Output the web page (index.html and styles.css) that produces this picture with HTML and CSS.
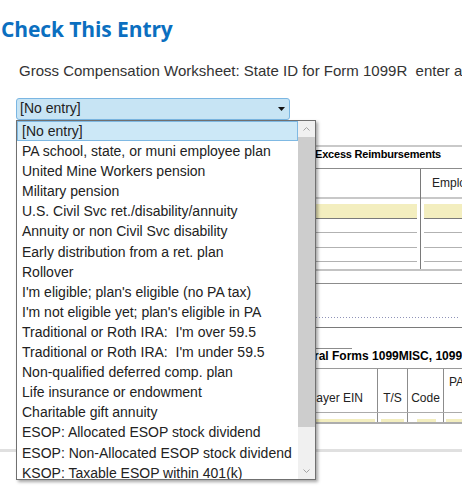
FILE: index.html
```html
<!DOCTYPE html>
<html>
<head>
<meta charset="utf-8">
<link rel="stylesheet" href="styles.css">
</head>
<body>
<h1 class="title">Check This Entry</h1>
<p class="prompt">Gross Compensation Worksheet: State ID for Form 1099R&nbsp; enter a code</p>

<div class="picker">
  <div class="select">
    <span class="select-value">[No entry]</span>
    <svg class="select-arrow" width="7" height="4" viewBox="0 0 7 4"><path d="M0 0H7L3.5 4Z" fill="#111"/></svg>
  </div>
  <div class="listbox">
    <ul class="options">
      <li class="option selected">[No entry]</li>
      <li class="option">PA school, state, or muni employee plan</li>
      <li class="option">United Mine Workers pension</li>
      <li class="option">Military pension</li>
      <li class="option">U.S. Civil Svc ret./disability/annuity</li>
      <li class="option">Annuity or non Civil Svc disability</li>
      <li class="option">Early distribution from a ret. plan</li>
      <li class="option">Rollover</li>
      <li class="option">I'm eligible; plan's eligible (no PA tax)</li>
      <li class="option">I'm not eligible yet; plan's eligible in PA</li>
      <li class="option">Traditional or Roth IRA:&nbsp; I'm over 59.5</li>
      <li class="option">Traditional or Roth IRA:&nbsp; I'm under 59.5</li>
      <li class="option">Non-qualified deferred comp. plan</li>
      <li class="option">Life insurance or endowment</li>
      <li class="option">Charitable gift annuity</li>
      <li class="option">ESOP: Allocated ESOP stock dividend</li>
      <li class="option">ESOP: Non-Allocated ESOP stock dividend</li>
      <li class="option">KSOP: Taxable ESOP within 401(k)</li>
    </ul>
    <div class="scrollbar">
      <div class="sb-btn"><svg width="7" height="4" viewBox="0 0 7 4"><path d="M0.5 3.5L3.5 0.5L6.5 3.5" fill="none" stroke="#a3a3a3" stroke-width="1"/></svg></div>
      <div class="sb-thumb"></div>
      <div class="sb-track"></div>
      <div class="sb-btn"><svg width="7" height="4" viewBox="0 0 7 4"><path d="M0.5 0.5L3.5 3.5L6.5 0.5" fill="none" stroke="#a3a3a3" stroke-width="1"/></svg></div>
    </div>
  </div>
</div>

<div class="sheet">
  <div class="form">
    <div class="sec-head">Excess Reimbursements</div>
    <div class="cols">
      <div class="col col-a">
        <div class="col-head"></div>
        <div class="band"></div>
        <div class="col-body">
          <div class="cell-input"></div>
          <div class="cell-line h13"></div>
          <div class="cell-line h14"></div>
          <div class="cell-line h13"></div>
        </div>
      </div>
      <div class="col col-b">
        <div class="col-head">Employee Reimbursements</div>
        <div class="band"></div>
        <div class="col-body">
          <div class="cell-input"></div>
          <div class="cell-line h13"></div>
          <div class="cell-line h14"></div>
          <div class="cell-line h13"></div>
        </div>
      </div>
    </div>
    <div class="band band-full"></div>
    <div class="blank"></div>
    <div class="dots"></div>
    <div class="blank2"></div>
    <div class="short-rule"></div>
    <div class="sec-head2">Federal Forms 1099MISC, 1099R</div>
    <div class="tbl-head">
      <div class="th th-ein">Payer EIN</div>
      <div class="th th-center">T/S</div>
      <div class="th th-center">Code</div>
      <div class="th th-pa">PA</div>
    </div>
    <div class="tbl-row">
      <div class="td td-ein"><span class="fill"></span></div>
      <div class="td td-ts"><span class="fill"></span></div>
      <div class="td td-code"><span class="fill"></span></div>
      <div class="td td-pa"><span class="fill"></span></div>
    </div>
  </div>
</div>
<div class="separator"></div>
</body>
</html>
```

FILE: styles.css
```css
html, body {
  margin: 0;
  padding: 0;
  background: #fff;
}
body {
  width: 462px;
  height: 501px;
  overflow: hidden;
  font-family: "Liberation Sans", Arial, sans-serif;
  color: #222;
}

.title {
  margin: 15px 0 0 1px;
  font-family: "Open Sans", "Liberation Sans", sans-serif;
  font-weight: 700;
  font-size: 21px;
  line-height: 28px;
  color: #0b6fc0;
  letter-spacing: -0.1px;
}

.prompt {
  margin: 19px 0 0 19px;
  font-size: 15px;
  line-height: 18px;
  color: #333;
  white-space: nowrap;
}

.picker {
  position: relative;
  margin: 18px 0 0 16px;
  width: 274px;
}

.select {
  box-sizing: border-box;
  height: 22px;
  border: 1px solid #7bb6e2;
  border-radius: 3px;
  background: #c7e4f4;
  display: flex;
  align-items: center;
  justify-content: space-between;
  padding: 0 4px 0 3px;
  font-size: 14px;
  line-height: 19px;
  color: #222;
}
.select-value {
  padding-bottom: 1px;
}
.select-arrow {
  display: block;
  margin-bottom: 1px;
}

.listbox {
  position: absolute;
  top: 22px;
  left: 0;
  box-sizing: border-box;
  width: 300px;
  height: 360px;
  border: 1px solid #707070;
  background: #fff;
  display: flex;
  box-shadow: 2px 2px 3px rgba(0, 0, 0, 0.35);
  z-index: 5;
}

.options {
  flex: 1;
  margin: 0;
  padding: 0;
  list-style: none;
  overflow: hidden;
}
.option {
  height: 20.1px;
  line-height: 21px;
  padding-left: 5px;
  font-size: 14px;
  white-space: nowrap;
  color: #222;
}
.option.selected {
  background: #cce8f7;
  box-shadow: inset 0 0 0 1px #7fb9e3;
}

.scrollbar {
  width: 17px;
  background: #f0f0f0;
  display: flex;
  flex-direction: column;
}
.sb-btn {
  height: 16px;
  display: flex;
  align-items: center;
  justify-content: center;
}
.sb-btn:last-child {
  height: 17px;
}
.sb-thumb {
  height: 290px;
  background: #cdcdcd;
}
.sb-track {
  flex: 1;
}

/* background form */
.sheet {
  margin: 25px 0 0 16px;
  overflow: hidden;
}
.form {
  width: 560px;
  color: #000;
}

.sec-head {
  height: 21px;
  border-top: 2px solid #c9c9c9;
  border-bottom: 1px solid #8c8c8c;
  padding-left: 299px;
  font-weight: 700;
  font-size: 11px;
  line-height: 14px;
  letter-spacing: -0.2px;
  white-space: nowrap;
}

.cols {
  display: grid;
  grid-template-columns: 405px 1fr;
}
.col {
  box-sizing: border-box;
}
.col-a {
  border-right: 1px solid #7a7a7a;
}
.col-head {
  height: 28px;
  font-size: 12px;
  line-height: 28px;
  padding-left: 11px;
  white-space: nowrap;
  color: #222;
}
.band {
  height: 2px;
  background: #c8c8c8;
}
.col-body {
  padding: 5px 0 7px;
}
.col-a .col-body {
  margin-right: 3px;
}
.col-b .col-body {
  margin-left: 3px;
}
.cell-input {
  height: 14px;
  background: #f3eebf;
  border-bottom: 1px solid #7a7a7a;
}
.cell-line {
  border-bottom: 1px solid #b2b2b2;
}
.h13 { height: 13px; }
.h14 { height: 14px; }

.band-full {
  background: #c3c3c3;
}
.blank {
  height: 12px;
  border-bottom: 1px solid #8c8c8c;
}
.dots {
  height: 34px;
  background-image: repeating-linear-gradient(90deg, #8f93b8 0 1px, transparent 1px 3px);
  background-size: 100% 1px;
  background-repeat: no-repeat;
  background-position: 0 33px;
  width: 444px;
}
.blank2 {
  height: 9px;
  border-bottom: 1px solid #7a7a7a;
}
.short-rule {
  width: 336px;
  height: 20px;
  border-bottom: 1px solid #8c8c8c;
}
.sec-head2 {
  height: 19px;
  border-bottom: 1px solid #9a9a9a;
  padding-left: 270px;
  font-weight: 700;
  font-size: 12px;
  line-height: 14px;
  white-space: nowrap;
}

.tbl-head, .tbl-row {
  display: grid;
  grid-template-columns: 362px 30px 36px 1fr;
}
.tbl-head {
  height: 43px;
  border-bottom: 1px solid #ababab;
}
.th {
  box-sizing: border-box;
  border-right: 1px solid #8c8c8c;
  font-size: 12px;
  line-height: 14px;
  color: #222;
  white-space: nowrap;
  display: flex;
  align-items: flex-end;
  padding-bottom: 7px;
}
.th-ein {
  justify-content: flex-end;
  padding-right: 14px;
}
.th-center {
  justify-content: center;
}
.th-pa {
  border-right: 0;
  align-items: flex-start;
  padding: 6px 0 0 5px;
}

.tbl-row {
  height: 9px;
  border-bottom: 2px solid #adadad;
}
.td {
  box-sizing: border-box;
  border-right: 1px solid #8c8c8c;
  display: flex;
  align-items: flex-end;
}
.td-pa {
  border-right: 0;
}
.fill {
  display: block;
  height: 3px;
  background: #f3eebf;
  flex: 1;
}
.td-ein .fill { margin-right: 2px; }
.td-ts .fill { margin: 0 3px; }
.td-code .fill { margin: 0 7px 0 9px; }
.td-pa .fill { margin-left: 2px; }

.separator {
  margin-top: 25px;
  height: 3px;
  background: #e0e0e0;
}
```
